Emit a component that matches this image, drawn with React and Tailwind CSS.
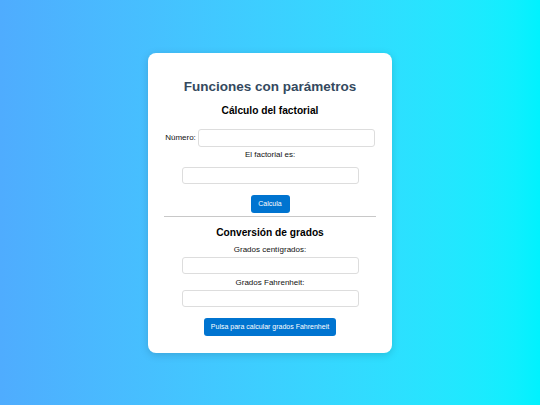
export default function App() {
  const input = "block w-[177px] h-[18px] rounded-[3px] border border-[#dddddd] bg-white";
  const label = "text-[8px] leading-[9px] text-[#111]";
  const button = "h-[18px] rounded-[3px] bg-[#0074d0] text-white text-[7px] leading-[18px]";

  return (
    <div
      className="w-full h-[405px] flex items-center justify-center bg-gradient-to-r from-[#4facfe] to-[#00f2fe]"
      style={{ fontFamily: '"Liberation Sans", Arial, sans-serif' }}
    >
      <div className="w-[244px] h-[300px] bg-white rounded-[8px] shadow-[0_2px_8px_rgba(0,0,0,0.15)] px-4 pt-[26px] pb-4 flex flex-col items-center">
        <h1 className="text-[13.5px] leading-[16px] font-bold text-[#34495e]">Funciones con parámetros</h1>

        <h2 className="mt-[10px] text-[10.2px] leading-[12px] font-bold text-black">Cálculo del factorial</h2>

        <div className="mt-[12px] flex items-center gap-[2px]">
          <span className={label + " text-[7.5px]"}>Número:</span>
          <div className={input}></div>
        </div>

        <p className={label + " mt-[3px]"}>El factorial es:</p>
        <div className={input + " mt-[8px]"}></div>

        <button className={button + " mt-[11px] w-[39px]"}>Calcula</button>

        <div className="mt-[3px] w-full h-px bg-[#c8c8c8]"></div>

        <h2 className="mt-[10px] text-[10.2px] leading-[12px] font-bold text-black">Conversión de grados</h2>

        <p className={label + " mt-[6px]"}>Grados centígrados:</p>
        <div className={input + " mt-[3px] h-[17px]"}></div>

        <p className={label + " mt-[4px]"}>Grados Fahrenheit:</p>
        <div className={input + " mt-[3px] h-[17px]"}></div>

        <button className={button + " mt-[11px] w-[132px]"}>Pulsa para calcular grados Fahrenheit</button>
      </div>
    </div>
  );
}
